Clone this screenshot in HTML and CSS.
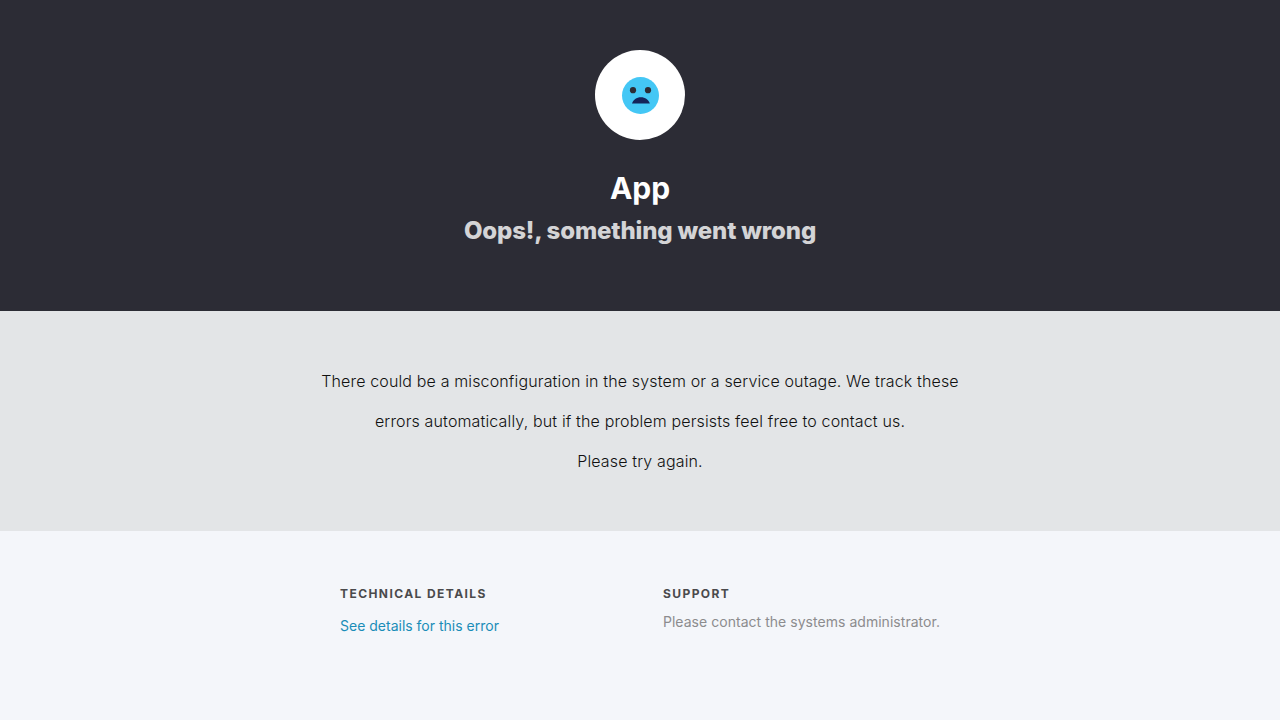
FILE: index.html
```html
<!DOCTYPE html>
<html lang="en">
<head>
<meta charset="utf-8">
<title>App</title>
<link rel="stylesheet" href="styles.css">
</head>
<body>
<header class="hero">
  <div class="badge">
    <svg class="face" viewBox="0 0 38 38" aria-hidden="true">
      <circle cx="19.500" cy="18.500" r="18.500" fill="#44c7f5"/>
      <circle cx="12" cy="13.200" r="3.100" fill="#2c2c35"/>
      <circle cx="27" cy="13.200" r="3.100" fill="#2c2c35"/>
      <path d="M11 26.500c1-3.600 4.600-6.200 8.900-6.200s7.900 2.600 8.900 6.200z" fill="#15245a"/>
    </svg>
  </div>
  <h1 class="title">App</h1>
  <h2 class="subtitle">Oops!, something went wrong</h2>
</header>
<section class="message">
  <p class="message-text">There could be a misconfiguration in the system or a service outage. We track these errors automatically, but if the problem persists feel free to contact us.<br>Please try again.</p>
</section>
<footer class="info">
  <div class="column">
    <h3 class="label">Technical details</h3>
    <a class="link" href="#">See details for this error</a>
  </div>
  <div class="column">
    <h3 class="label">Support</h3>
    <p class="note">Please contact the systems administrator.</p>
  </div>
</footer>
</body>
</html>
```
FILE: styles.css
```css
* { box-sizing: border-box; }
body { margin: 0; min-height: 720px; background: #f4f6fa; font-family: Inter, sans-serif; }
h1, h2, h3, p { margin: 0; }
.hero { height: 311px; padding-top: 50px; background: #2c2c35; text-align: center; display: flex; flex-direction: column; align-items: center; }
.badge { width: 90px; height: 90px; border-radius: 50%; background: #fff; display: flex; align-items: center; justify-content: center; }
.face { width: 38px; height: 38px; display: block; margin-top: 2px; }
.title { margin-top: 28px; font-size: 30px; line-height: 40px; font-weight: 700; color: #fff; }
.subtitle { margin-top: 5px; font-size: 24px; line-height: 36px; font-weight: 800; letter-spacing: -0.15px; color: #fff; opacity: 0.8; }
.message { height: 220px; padding-top: 50px; background: #e3e5e7; text-align: center; }
.message-text { width: 640px; margin: 0 auto; font-size: 16px; line-height: 40px; font-weight: 300; letter-spacing: 0.145px; color: #111; }
.info { width: 600px; margin: 0 auto; padding-top: 54px; display: flex; justify-content: space-between; }
.label { font-size: 12px; line-height: 18px; font-weight: 700; letter-spacing: 1.42px; text-transform: uppercase; color: #4a4a4c; }
.link { display: block; margin-top: 11px; font-size: 14px; line-height: 24px; color: #1a8db8; text-decoration: none; }
.note { margin-top: 7px; font-size: 14px; line-height: 24px; letter-spacing: 0.035px; color: #8c8c8e; }
```
